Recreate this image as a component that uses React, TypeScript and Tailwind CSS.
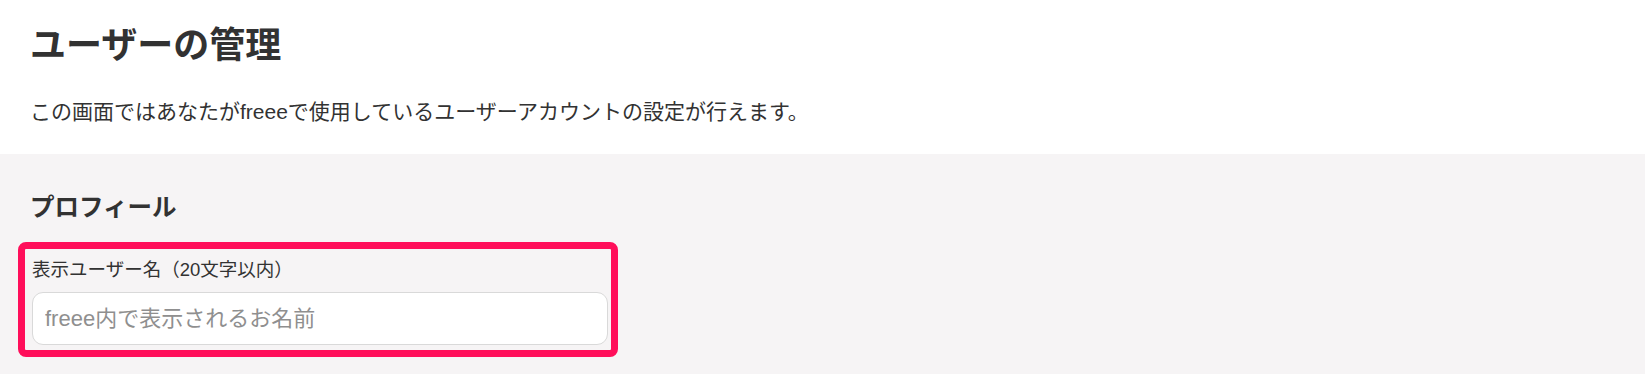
export default function App() {
  return (
    <main
      className="min-h-screen w-full bg-[#f6f4f5] text-[#323232]"
      style={{ fontFamily: '"Liberation Sans", "Noto Sans CJK JP", sans-serif' }}
    >
      <header className="bg-white px-[30px] pt-[23px] pb-[27px]">
        <h1 className="text-[36px] leading-[46px] font-bold">ユーザーの管理</h1>
        <p className="mt-[28px] text-[21px] leading-[30px]">
          この画面ではあなたがfreeeで使用しているユーザーアカウントの設定が行えます。
        </p>
      </header>

      <section className="px-[18px] pt-[38px] pb-[20px]">
        <h2 className="ml-[12px] text-[24.5px] leading-[32px] font-bold">プロフィール</h2>

        <div className="mt-[18px] w-[600px] rounded-[8px] border-[7px] border-[#ff0e5a] pt-[12px] pl-[7px] pr-[3px] pb-[5px]">
          <label htmlFor="display-name" className="block text-[18.5px] leading-[18px]">
            表示ユーザー名（20文字以内）
          </label>
          <input
            id="display-name"
            type="text"
            placeholder="freee内で表示されるお名前"
            className="mt-[13px] block h-[53px] w-full rounded-[11px] border border-[#d9d9d9] bg-white px-[12px] text-[22px] placeholder:text-[#8f8f8f] outline-none"
          />
        </div>
      </section>
    </main>
  );
}
